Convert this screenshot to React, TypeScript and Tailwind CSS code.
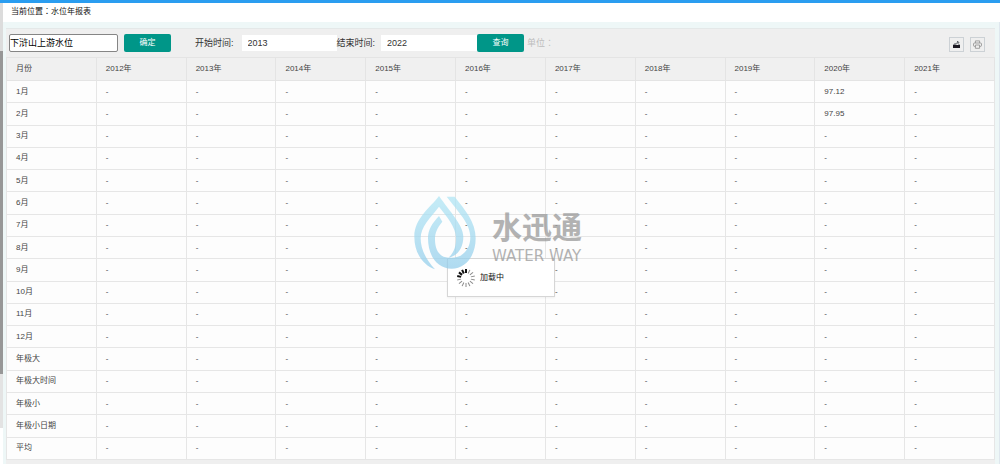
import { useState } from "react";

const YEARS = ["2012", "2013", "2014", "2015", "2016", "2017", "2018", "2019", "2020", "2021"];

const ROWS = [
    "1月", "2月", "3月", "4月", "5月", "6月", "7月", "8月", "9月", "10月", "11月", "12月",
    "年极大", "年极大时间", "年极小", "年极小日期", "平均",
];

const LEVELS: Record<string, Record<string, string>> = {
    "1月": { "2020": "97.12" },
    "2月": { "2020": "97.95" },
};

const Spinner = () => (
    <svg viewBox="0 0 20 20" className="size-5" aria-hidden="true">
        {Array.from({ length: 14 }, (_, i) => (
            <line
                key={i}
                x1="10"
                y1="1"
                x2="10"
                y2="5"
                stroke={i === 0 || i > 10 ? "#111" : "#8a8a8a"}
                strokeWidth={i === 0 || i > 10 ? 2 : 1}
                transform={`rotate(${(i * 360) / 14} 10 10)`}
            />
        ))}
    </svg>
);

const DropLogo = () => (
    <svg viewBox="0 0 216 252" className="h-[84px] w-[72px] shrink-0" aria-hidden="true">
        <defs>
            <linearGradient id="drop" x1="0" y1="0" x2="0" y2="1">
                <stop offset="0" stopColor="#b0e6f5" />
                <stop offset="1" stopColor="#92cdeb" />
            </linearGradient>
        </defs>
        <g fill="url(#drop)" opacity="0.72">
            <path d="M87 18C60 54 13 85 13 140C13 190 40 226 75 238C45 205 32 175 32 145C32 110 60 85 87 50C110 80 138 110 138 145C138 170 132 189 115 203C145 198 160 170 160 140C160 105 120 66 87 18Z" />
            <path d="M110 20L134 20C165 60 197 95 197 145C197 200 165 236 125 236C80 236 54 195 54 145C54 120 66 100 87 78L97 95C80 116 75 130 75 148C75 182 90 202 115 203C155 208 181 180 181 142C181 100 145 66 110 20Z" />
        </g>
    </svg>
);

const ExportIcon = () => (
    <svg viewBox="0 0 9 9" className="size-[9px]" aria-hidden="true">
        <path d="M1 5h7v3H1z" fill="#1c1822" />
        <path d="M2 5V4h2M4 4.500c0-1.500 1-2 2-2M5 1.200L7 2.500 5.500 4M7 4v1" fill="none" stroke="#4d5158" strokeWidth="0.900" />
    </svg>
);

const PrintIcon = () => (
    <svg viewBox="0 0 9 9" className="size-[9px]" fill="none" stroke="#8d8d8d" strokeWidth="0.800" aria-hidden="true">
        <path d="M2.400 3V0.900h4.200V3M2.400 6.400H1.500Q.5 6.400.5 5.400V4Q.5 3 1.500 3h6Q8.500 3 8.500 4v1.400q0 1-1 1h-.9M2.400 5h4.200v3.300H2.400z" />
    </svg>
);

const App = () => {
    // query form
    const [station, setStation] = useState("下浒山上游水位");
    const [startYear, setStartYear] = useState("2013");
    const [endYear, setEndYear] = useState("2022");

    return (
        <div className="relative flex h-screen flex-col border-t-[3px] border-[#2a9df0] bg-[#eef7f7] font-['Liberation_Sans','Noto_Sans_CJK_SC',sans-serif] text-[8px] leading-3 text-[#444]">
            <div className="flex min-h-0 grow">
                {/* Scroll track */}
                <div className="flex w-[3px] shrink-0 flex-col bg-white">
                    <div className="h-12 bg-[#dcdcdc]" />
                    <div className="grow-[6] bg-[#979797]" />
                    <div className="grow bg-[#e3e3e3]" />
                    <div className="h-9" />
                </div>

                <div className="flex min-w-0 grow flex-col">
                    <nav className="bg-white px-2 pt-[3px] pb-1 font-['Liberation_Sans','Noto_Sans_CJK_TC',sans-serif] text-[#111]">当前位置：水位年报表</nav>

                    <div className="flex min-h-0 grow border-r border-[#dfe7ee] pt-1.5 pr-1 pl-[3px]">
                        <main className="flex min-w-0 grow flex-col border-t border-[#e4e8e8] bg-[#efefef] pb-1">
                            {/* Query bar */}
                            <form className="flex items-center pt-1 pr-2.5 pb-[5px] pl-[3px] text-[9px] text-[#333]" onSubmit={(e) => e.preventDefault()}>
                                <input
                                    aria-label="测站"
                                    className="h-[18px] w-[109px] rounded-xs border border-[#858585] bg-white text-black"
                                    value={station}
                                    onChange={(e) => setStation(e.target.value)}
                                />
                                <button type="button" className="ml-1.5 h-[18px] w-[47px] rounded-[2px] bg-[#009688] text-[8px] text-white">
                                    确定
                                </button>
                                <label htmlFor="start" className="ml-6">开始时间:</label>
                                <input
                                    id="start"
                                    className="ml-2 h-4 w-[95px] bg-white pl-1.5"
                                    value={startYear}
                                    onChange={(e) => setStartYear(e.target.value)}
                                />
                                <label htmlFor="end">结束时间:</label>
                                <input
                                    id="end"
                                    className="ml-1.5 h-4 w-24 bg-white pl-1.5"
                                    value={endYear}
                                    onChange={(e) => setEndYear(e.target.value)}
                                />
                                <button type="submit" className="h-[18px] w-[47px] rounded-[2px] bg-[#009688] text-[8px] text-white">
                                    查询
                                </button>
                                <span className="ml-[3px] font-['Liberation_Sans','Noto_Sans_CJK_TC',sans-serif] text-[#bdbdbd]">单位：</span>
                                <div className="ml-auto flex gap-1.5 pt-1">
                                    <button type="button" aria-label="导出" className="flex size-[15px] items-center justify-center border border-[#ccd1d5]">
                                        <ExportIcon />
                                    </button>
                                    <button type="button" aria-label="打印" className="flex size-[15px] items-center justify-center border border-[#ccd1d5]">
                                        <PrintIcon />
                                    </button>
                                </div>
                            </form>

                            {/* Yearly levels */}
                            <div className="min-h-0 grow">
                                <table className="h-full w-full table-fixed border-collapse bg-[#fdfdfd] text-left">
                                    <thead className="bg-[#f0f0f0]">
                                        <tr>
                                            <th className="h-[23px] border border-[#e4e4e4] px-[9px] font-normal">月份</th>
                                            {YEARS.map((year) => (
                                                <th key={year} className="border border-[#e4e4e4] px-[9px] font-normal">
                                                    {year}年
                                                </th>
                                            ))}
                                        </tr>
                                    </thead>
                                    <tbody>
                                        {ROWS.map((row) => (
                                            <tr key={row}>
                                                <td className="border border-[#e6e6e6] px-[9px]">{row}</td>
                                                {YEARS.map((year) => (
                                                    <td key={year} className="border border-[#e6e6e6] px-[9px]">
                                                        {LEVELS[row]?.[year] ?? "-"}
                                                    </td>
                                                ))}
                                            </tr>
                                        ))}
                                    </tbody>
                                </table>
                            </div>
                        </main>
                    </div>
                </div>
            </div>

            {/* Loading box */}
            <div role="status" className="absolute top-[255px] left-1/2 ml-px flex h-[39px] w-[108px] -translate-x-1/2 items-center gap-1 border border-[#d6d6d6] bg-white pl-2 text-[#111] shadow-xs">
                <Spinner />
                加载中
            </div>

            {/* Watermark */}
            <div className="pointer-events-none absolute top-[187px] left-1/2 flex w-[180px] -translate-x-1/2 gap-2.5">
                <DropLogo />
                <div className="pt-5 whitespace-nowrap text-[#999] opacity-75">
                    <div className="text-[30px] leading-9 font-bold">水迅通</div>
                    <div className="font-['DejaVu_Sans',sans-serif] text-[15px] leading-5">WATER WAY</div>
                </div>
            </div>
        </div>
    );
};

export default App;
